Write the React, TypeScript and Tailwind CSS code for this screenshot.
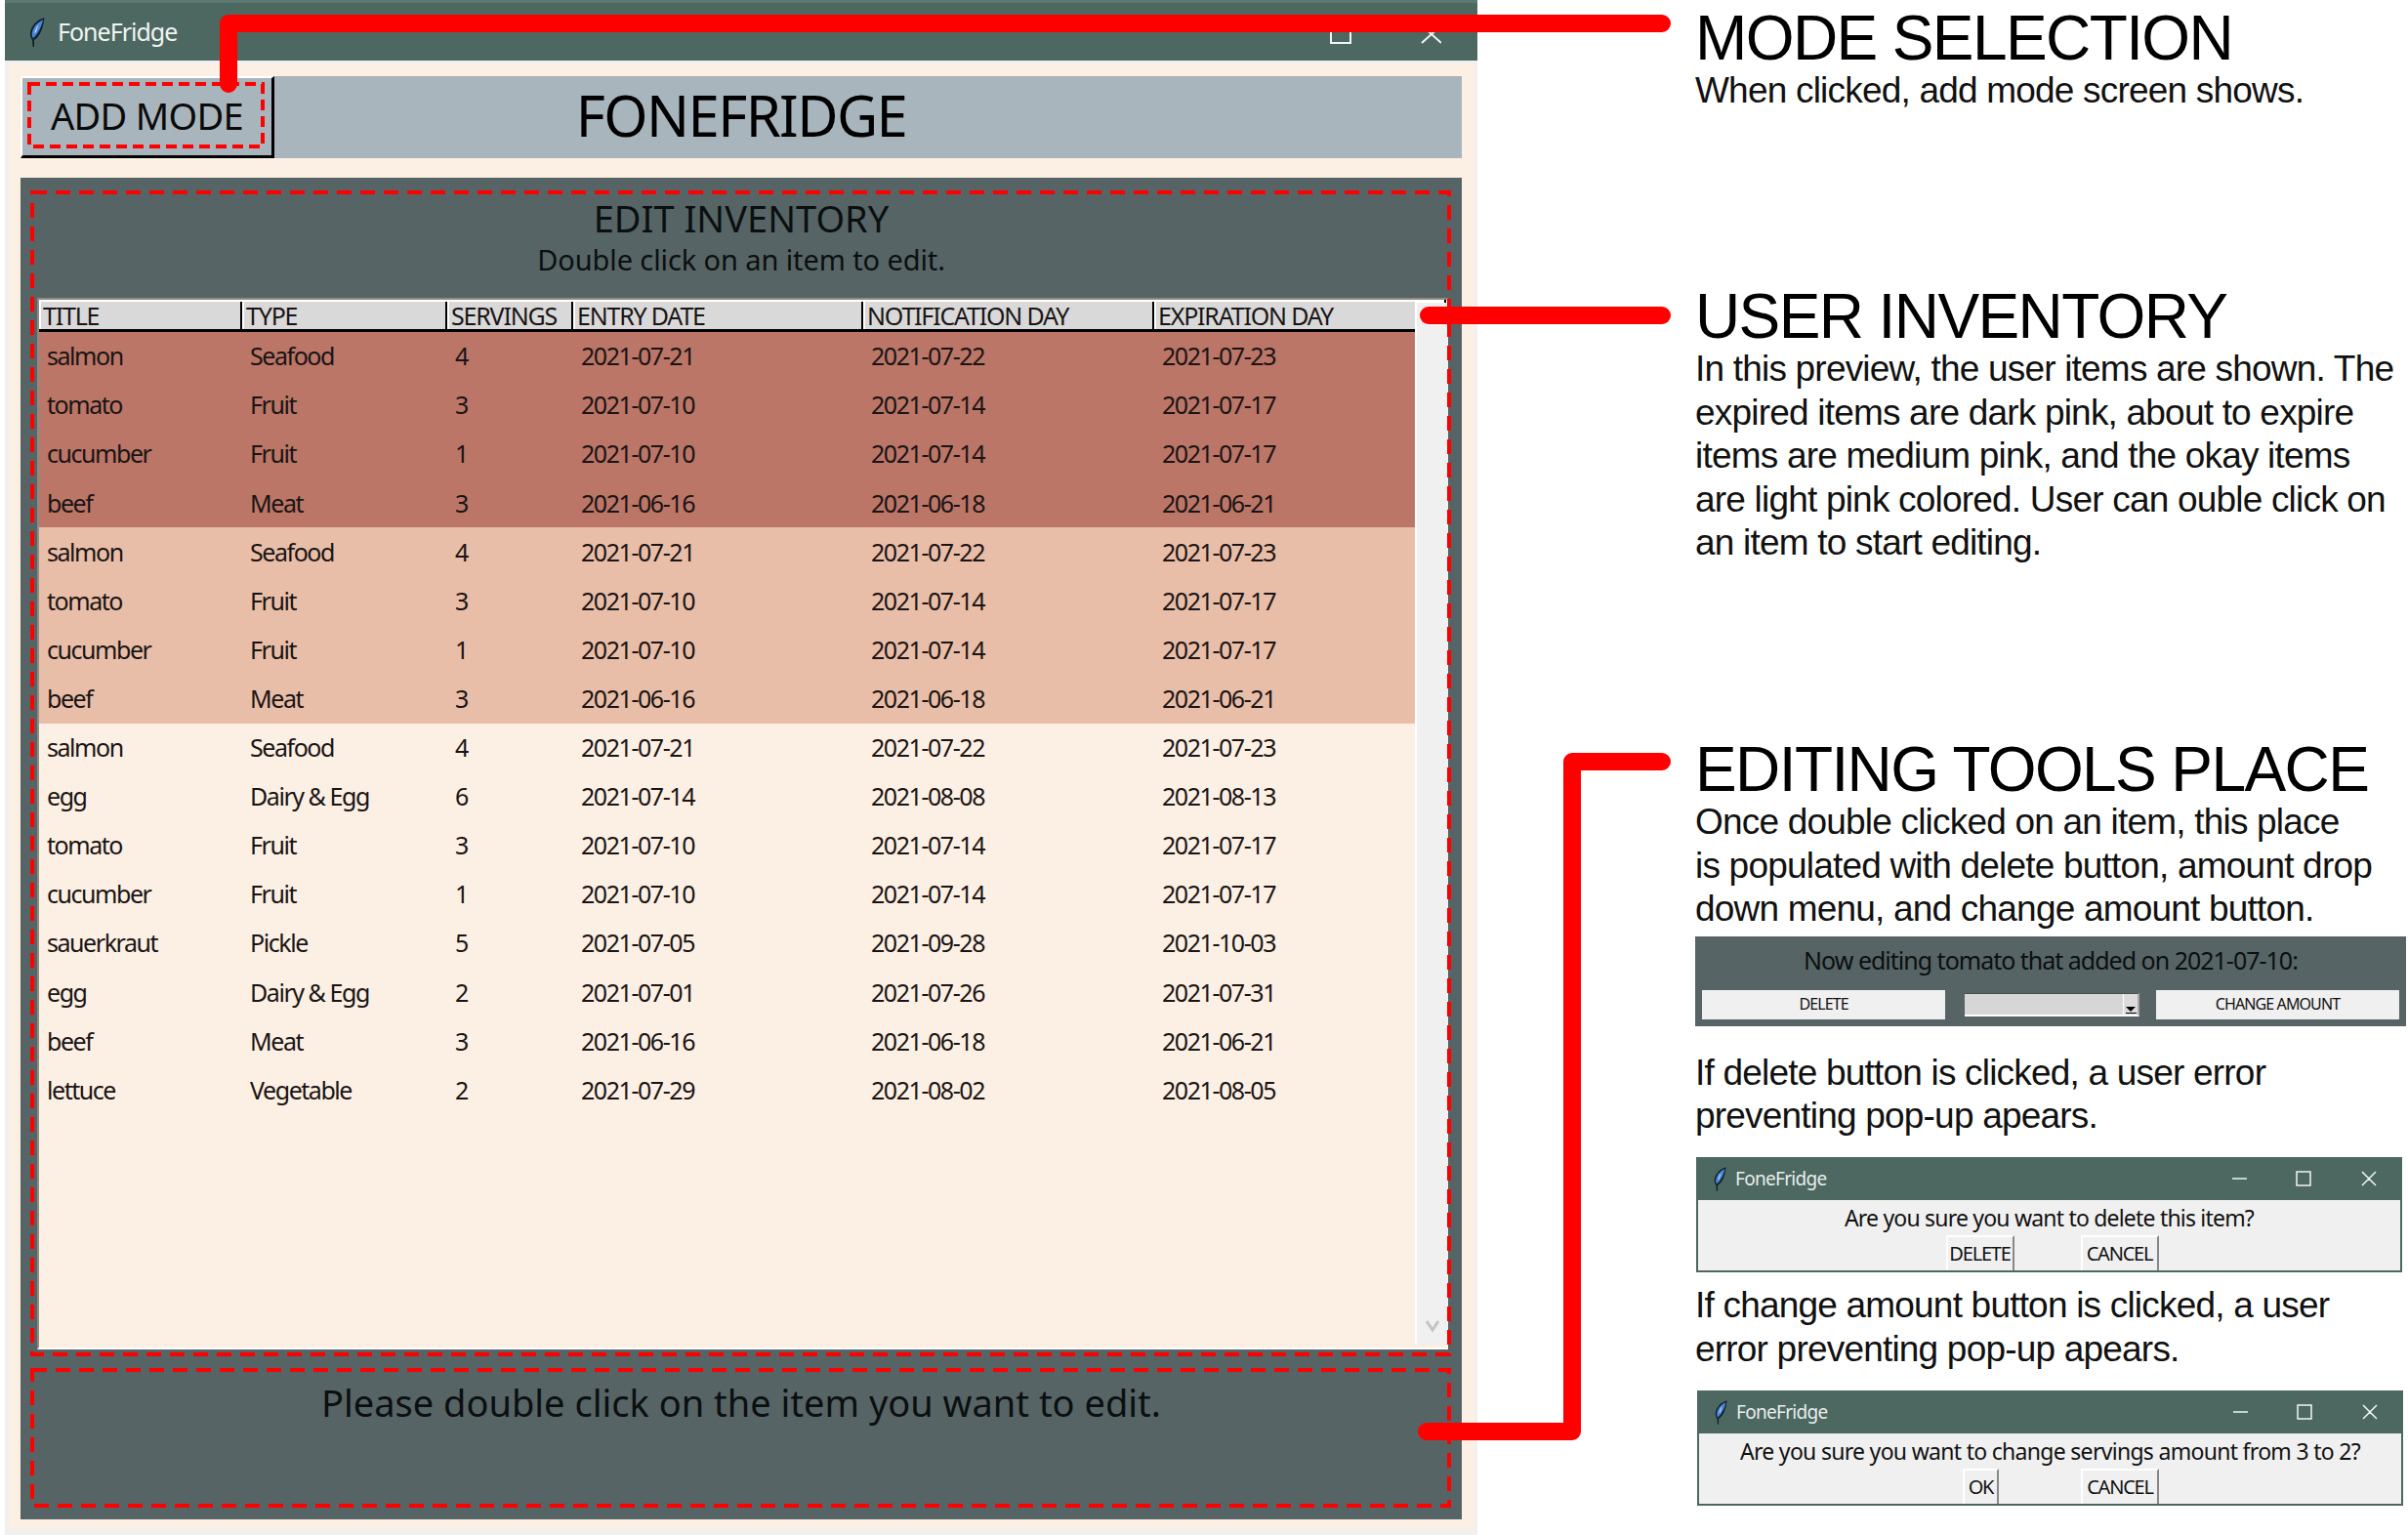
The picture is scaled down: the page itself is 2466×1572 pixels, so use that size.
import React from "react"

type Row = [string, string, string, string, string, string]

const expired: Row[] = [
  ["salmon", "Seafood", "4", "2021-07-21", "2021-07-22", "2021-07-23"],
  ["tomato", "Fruit", "3", "2021-07-10", "2021-07-14", "2021-07-17"],
  ["cucumber", "Fruit", "1", "2021-07-10", "2021-07-14", "2021-07-17"],
  ["beef", "Meat", "3", "2021-06-16", "2021-06-18", "2021-06-21"],
]

const okay: Row[] = [
  ["salmon", "Seafood", "4", "2021-07-21", "2021-07-22", "2021-07-23"],
  ["egg", "Dairy & Egg", "6", "2021-07-14", "2021-08-08", "2021-08-13"],
  ["tomato", "Fruit", "3", "2021-07-10", "2021-07-14", "2021-07-17"],
  ["cucumber", "Fruit", "1", "2021-07-10", "2021-07-14", "2021-07-17"],
  ["sauerkraut", "Pickle", "5", "2021-07-05", "2021-09-28", "2021-10-03"],
  ["egg", "Dairy & Egg", "2", "2021-07-01", "2021-07-26", "2021-07-31"],
  ["beef", "Meat", "3", "2021-06-16", "2021-06-18", "2021-06-21"],
  ["lettuce", "Vegetable", "2", "2021-07-29", "2021-08-02", "2021-08-05"],
]

const columns = ["TITLE", "TYPE", "SERVINGS", "ENTRY DATE", "NOTIFICATION DAY", "EXPIRATION DAY"]

function Feather({ className }: { className: string }) {
  return (
    <svg viewBox="0 0 16 30" className={className}>
      <path d="M15.500 0C9 2 2.500 7 1 15c-.5 3 .5 6 2 8l.5 7h1.500l0-7c5-3 9-10 10.500-23z" fill="#14202e" />
      <path d="M14 2.500C9 4.500 4 9 2.800 15.500c-.3 2 .2 4 1 5.500C8 18 12 11 14 2.500z" fill="#4a86dc" />
      <path d="M9.500 7C7.500 9.500 6 12.500 5.500 16l1.300-1C7.500 12.500 8.500 10 9.500 7z" fill="#dbe8f8" />
    </svg>
  )
}

function Rows({ rows, color }: { rows: Row[]; color: string }) {
  return (
    <div className={color}>
      {rows.map((row, i) => (
        <div key={i} className="grid grid-cols-[208px_210px_129px_297px_298px_267px] h-[50.1px] items-center">
          {row.map((cell, j) => (
            <div key={j} className="pl-[8px]">{cell}</div>
          ))}
        </div>
      ))}
    </div>
  )
}

function Popup({ message, tracking, confirm, confirmWidth, buttons }: { message: string; tracking: string; confirm: string; confirmWidth: string; buttons: string }) {
  return (
    <div className="w-[723px] h-[118px] bg-[#f0f0f0] border-2 border-t-0 border-[#4c6860] flex flex-col font-['Noto_Sans',sans-serif]">
      <div className="h-[44px] -mx-[2px] bg-[#4c6860] flex items-center pl-[18px] text-[#e8eeec] text-[19px] tracking-[-0.7px]">
        <Feather className="w-[13px] h-[25px] mr-[9px]" />
        <span>FoneFridge</span>
        <svg viewBox="0 0 160 20" className="ml-auto mr-[20px] w-[160px] h-[20px]" fill="none" stroke="#f2f5f4" strokeWidth="1.5">
          <path d="M6 10h15M72 3h14v14H72zM139 3l14 14M153 3l-14 14" />
        </svg>
      </div>
      <div className={`text-center text-[23px] leading-[26px] pt-[5px] ${tracking} text-[#111]`}>{message}</div>
      <div className={`flex justify-center ${buttons} mt-auto text-[20px] tracking-[-1.2px] text-[#111]`}>
        <div className={`${confirmWidth} h-[36px] flex items-center justify-center border-l-2 border-t-2 border-r-2 border-l-white border-t-white border-r-[#888]`}>{confirm}</div>
        <div className="w-[80px] h-[36px] flex items-center justify-center border-l-2 border-t-2 border-r-2 border-l-white border-t-white border-r-[#888]">CANCEL</div>
      </div>
    </div>
  )
}

export default function App() {
  return (
    <div className="relative w-[2466px] h-[1572px] bg-white flex overflow-hidden font-['Liberation_Sans',sans-serif] text-black">
      {/* app window */}
      <div className="w-[1508px] ml-[5px] shrink-0 bg-[#f0f0f0] flex flex-col font-['Noto_Sans',sans-serif]">
        <div className="h-[62px] bg-[#4c6860] border-t-[3px] border-t-[#5d7870] flex items-center pl-[25px] text-[#f0f4f2] text-[25px] tracking-[-1px]">
          <Feather className="w-[16px] h-[30px] mr-[13px]" />
          <span>FoneFridge</span>
          <svg viewBox="0 0 130 24" className="ml-auto mr-[37px] w-[130px] h-[24px]" fill="none" stroke="#f2f5f4" strokeWidth="2">
            <path d="M17 3h20v20H17zM110 5l20 18M130 5l-20 18" />
          </svg>
        </div>
        <div className="mt-[3px] ml-[4px] mr-[3px] h-[1501px] bg-[#fcf0e4] pt-[13px] pl-[12px] pr-[13px] flex flex-col">
          <div className="h-[84px] bg-[#a9b5bc] flex shrink-0">
            <div className="w-[260px] h-full pb-[2px] border-l-2 border-t-2 border-white border-r-[3px] border-b-[3px] border-r-black border-b-black flex items-center justify-center text-[38px] tracking-[-0.7px] text-[#0a0a0a]">ADD MODE</div>
            <div className="flex-1 pb-[6px] flex items-center justify-center text-[58px] tracking-[-1.6px] -ml-[260px]">FONEFRIDGE</div>
          </div>
          <div className="mt-[20px] h-[1374px] bg-[#566465] flex flex-col pl-[17px] text-[#0c0f10]">
            <div className="h-[123px] shrink-0 flex flex-col items-center pt-[19px] -ml-[17px]">
              <div className="text-[38px] leading-[44px] tracking-[0px]">EDIT INVENTORY</div>
              <div className="text-[29px] leading-[40px] tracking-[-0.1px] mt-[1px]">Double click on an item to edit.</div>
            </div>
            <div className="w-[1445px] h-[1077px] shrink-0 bg-[#fcf0e4] border-t-2 border-l-2 border-t-[#8f8a82] border-l-[#8f8a82] border-b-2 border-b-white flex text-[25px] tracking-[-1.45px] text-[#1a1414]">
              <div className="w-[1409px]">
                <div className="grid grid-cols-[208px_210px_129px_297px_298px_267px] h-[33px] bg-[#d9d9d9] border-t-2 border-t-white border-b-[3px] border-black text-[25px] leading-[28px] tracking-[-1.2px] items-center">
                  {columns.map((name) => (
                    <div key={name} className="h-full pl-[2px] border-l-2 border-l-white flex items-center border-r-2 border-r-black last:border-r-0 whitespace-nowrap">{name}</div>
                  ))}
                </div>
                <Rows rows={expired} color="bg-[#bb7668]" />
                <Rows rows={expired} color="bg-[#e9bea8]" />
                <Rows rows={okay} color="bg-[#fcf0e4]" />
              </div>
              <div className="w-[34px] flex flex-col">
                <div className="h-[3px] bg-white flex justify-end">
                  <div className="w-[2px] h-[3px] mr-[2px] bg-black" />
                </div>
                <div className="h-[1066px] bg-[#f0f0f0] border-l-2 border-white flex items-end justify-center pb-[10px]">
                  <svg viewBox="0 0 16 16" className="w-[16px] h-[16px]" fill="none" stroke="#c4c4c4" strokeWidth="3">
                    <path d="M2 3l6 9 6-9" />
                  </svg>
                </div>
              </div>
            </div>
            <div className="pt-[32px] text-center text-[38px] leading-[44px] tracking-[0px] -ml-[17px]">Please double click on the item you want to edit.</div>
          </div>
        </div>
      </div>

      {/* notes column */}
      <div className="ml-[223px] w-[730px] pt-[7px] flex flex-col text-[37px] leading-[44.4px] tracking-[-0.8px] whitespace-nowrap text-[#111]">
        <div className="text-[64px] leading-[64px] tracking-[-1.6px] text-black">MODE SELECTION</div>
        <div>When clicked, add mode screen shows.</div>
        <div className="text-[64px] leading-[64px] tracking-[-1.6px] text-black mt-[177px]">USER INVENTORY</div>
        <div>In this preview, the user items are shown. The<br />expired items are dark pink, about to expire<br />items are medium pink, and the okay items<br />are light pink colored. User can ouble click on<br />an item to start editing.</div>
        <div className="text-[64px] leading-[64px] tracking-[-1.6px] text-black mt-[178px]">EDITING TOOLS PLACE</div>
        <div>Once double clicked on an item, this place<br />is populated with delete button, amount drop<br />down menu, and change amount button.</div>
        <div className="mt-[5px] w-[728px] h-[92px] bg-[#566465] flex flex-col font-['Noto_Sans',sans-serif] shrink-0">
          <div className="h-[55px] pt-[7px] text-center text-[25px] leading-[34px] tracking-[-1px] text-[#0c0f10]">Now editing tomato that added on 2021-07-10:</div>
          <div className="flex items-center px-[7px] text-[16px] tracking-[-0.9px] text-[#111]">
            <div className="w-[249px] h-[30px] bg-[#f0f0f0] flex items-center justify-center">DELETE</div>
            <div className="w-[179px] h-[24px] ml-[20px] mr-[17px] bg-[#d6d6d6] border-t border-t-[#46514f] border-r-2 border-r-[#a8a8a8] border-b-2 border-b-white flex justify-end">
              <div className="w-[15px] h-full bg-[#dcdcdc] border-l border-l-white flex flex-col items-center justify-end pb-[1px]">
                <div className="w-0 h-0 border-l-[5px] border-r-[5px] border-t-[5px] border-l-transparent border-r-transparent border-t-black" />
                <div className="w-[11px] h-[1px] mt-[1px] bg-black" />
              </div>
            </div>
            <div className="w-[249px] h-[30px] bg-[#f0f0f0] flex items-center justify-center">CHANGE AMOUNT</div>
          </div>
        </div>
        <div className="mt-[26px]">If delete button is clicked, a user error<br />preventing pop-up apears.</div>
        <div className="mt-[20px] ml-[1px] shrink-0">
          <Popup message="Are you sure you want to delete this item?" tracking="tracking-[-0.8px]" confirm="DELETE" confirmWidth="w-[70px]" buttons="gap-[68px] pl-[6px]" />
        </div>
        <div className="mt-[12px]">If change amount button is clicked, a user<br />error preventing pop-up apears.</div>
        <div className="mt-[20px] ml-[2px] shrink-0">
          <Popup message="Are you sure you want to change servings amount from 3 to 2?" tracking="tracking-[-0.7px]" confirm="OK" confirmWidth="w-[37px]" buttons="gap-[84px] pl-[22px]" />
        </div>
      </div>

      {/* red annotations over the screenshot */}
      <svg className="absolute left-0 top-0 w-[2466px] h-[1572px] pointer-events-none" viewBox="0 0 2466 1572" fill="none" stroke="#ff0000">
        <path d="M1702 24H234V86" strokeWidth="18" strokeLinecap="round" strokeLinejoin="round" />
        <path d="M1702 323H1463" strokeWidth="18" strokeLinecap="round" />
        <path d="M1702 780H1610V1466H1461" strokeWidth="18" strokeLinecap="round" strokeLinejoin="round" />
        <g strokeWidth="4" strokeDasharray="15 9">
          <rect x="30" y="86" width="239" height="64" strokeDasharray="11 6" />
          <rect x="33" y="197" width="1451" height="1190" />
          <rect x="33" y="1403" width="1451" height="139" />
        </g>
      </svg>
    </div>
  )
}
